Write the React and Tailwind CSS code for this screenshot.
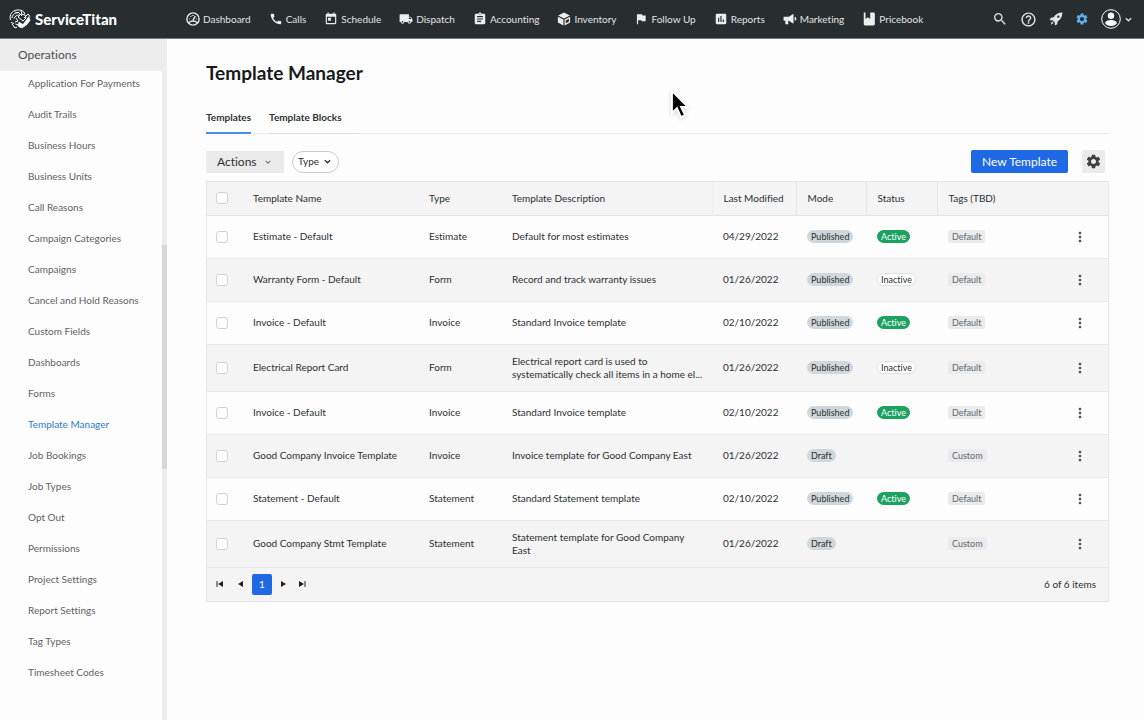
import {
  MdAssignment, MdCall, MdFlag, MdHelpOutline, MdInsertChart, MdLocalShipping,
  MdMoreVert, MdSearch, MdSettings, MdToday
} from 'react-icons/md';

const NAV = [
  { label: 'Dashboard',  icon: GaugeIcon },
  { label: 'Calls',      icon: MdCall },
  { label: 'Schedule',   icon: MdToday },
  { label: 'Dispatch',   icon: MdLocalShipping },
  { label: 'Accounting', icon: MdAssignment },
  { label: 'Inventory',  icon: BoxIcon },
  { label: 'Follow Up',  icon: MdFlag },
  { label: 'Reports',    icon: MdInsertChart },
  { label: 'Marketing',  icon: HornIcon },
  { label: 'Pricebook',  icon: BookIcon }
];

const SIDE = [
  'Application For Payments', 'Audit Trails', 'Business Hours', 'Business Units', 'Call Reasons',
  'Campaign Categories', 'Campaigns', 'Cancel and Hold Reasons', 'Custom Fields', 'Dashboards',
  'Forms', 'Template Manager', 'Job Bookings', 'Job Types', 'Opt Out', 'Permissions',
  'Project Settings', 'Report Settings', 'Tag Types', 'Timesheet Codes'
];

const ROWS = [
  { name: 'Estimate - Default',            type: 'Estimate',  desc: 'Default for most estimates',             date: '04/29/2022', mode: 'Published', status: 'Active',   tag: 'Default' },
  { name: 'Warranty Form - Default',       type: 'Form',      desc: 'Record and track warranty issues',       date: '01/26/2022', mode: 'Published', status: 'Inactive', tag: 'Default' },
  { name: 'Invoice - Default',             type: 'Invoice',   desc: 'Standard Invoice template',              date: '02/10/2022', mode: 'Published', status: 'Active',   tag: 'Default' },
  { name: 'Electrical Report Card',        type: 'Form',      desc: 'Electrical report card is used to\nsystematically check all items in a home el...', date: '01/26/2022', mode: 'Published', status: 'Inactive', tag: 'Default', tall: true },
  { name: 'Invoice - Default',             type: 'Invoice',   desc: 'Standard Invoice template',              date: '02/10/2022', mode: 'Published', status: 'Active',   tag: 'Default' },
  { name: 'Good Company Invoice Template', type: 'Invoice',   desc: 'Invoice template for Good Company East', date: '01/26/2022', mode: 'Draft',     status: null,       tag: 'Custom' },
  { name: 'Statement - Default',           type: 'Statement', desc: 'Standard Statement template',            date: '02/10/2022', mode: 'Published', status: 'Active',   tag: 'Default' },
  { name: 'Good Company Stmt Template',    type: 'Statement', desc: 'Statement template for Good Company\nEast', date: '01/26/2022', mode: 'Draft',  status: null,       tag: 'Custom', tall: true }
];

export default function App() {
  return (
    <div className="flex h-screen flex-col overflow-hidden bg-[#fdfdfd] font-['Lato',sans-serif] text-[10px] text-[#2b3033] [font-variant-ligatures:none]">
      <TopBar />
      <div className="flex min-h-0 flex-1">
        <Sidebar />
        <main className="min-w-0 flex-1 pt-[22px] pr-[35px] pl-[39px]">
          <h1 className="text-[19px] leading-6 font-bold text-[#17191b]">Template Manager</h1>
          <Tabs />
          <Toolbar />
          <TemplateTable />
        </main>
      </div>
      <Cursor />
    </div>
  );
}

/* ─── Layout ─── */

function TopBar() {
  return (
    <header className="flex h-[39px] shrink-0 items-center border-b border-[#777b7e] bg-[#282d30] text-[#e2e4e5]">
      <div className="flex w-[180px] items-center gap-1 pl-[9px]">
        <LogoMark />
        <span className="text-[15px] font-black text-white">ServiceTitan</span>
      </div>
      <nav className="flex flex-1 items-center gap-[18px] pl-[6px]">
        {NAV.map(n => (
          <a key={n.label} href="#" className="flex items-center gap-[3px] whitespace-nowrap">
            <n.icon className="size-[14px] text-[#eceded]" />
            {n.label}
          </a>
        ))}
      </nav>
      <div className="flex items-center gap-3 pr-3">
        <button aria-label="Search"><MdSearch className="size-4" /></button>
        <button aria-label="Help"><MdHelpOutline className="size-[17px]" /></button>
        <button aria-label="What's new"><RocketIcon className="size-[14px]" /></button>
        <button aria-label="Settings"><MdSettings className="size-[14px] text-[#5db0ef]" /></button>
        <button aria-label="Account" className="flex items-center gap-1">
          <AvatarIcon />
          <Chevron className="size-[7px]" />
        </button>
      </div>
    </header>
  );
}

function Sidebar() {
  return (
    <aside className="flex w-[167px] shrink-0 flex-col">
      <h2 className="bg-[#ededed] pl-[18px] text-[12px] leading-8 text-[#4b4f52]">Operations</h2>
      <div className="flex min-h-0 flex-1">
        <ul className="-mt-[3px] flex-1">
          {SIDE.map(s => (
            <li key={s} className="h-[31px] pl-7 leading-[31px] whitespace-nowrap">
              <a href="#" className={s === 'Template Manager' ? 'text-[#2f7bc9]' : 'text-[#606366]'}>{s}</a>
            </li>
          ))}
        </ul>
        <div className="w-[5px] bg-[#ececec] pt-[174px]">
          <div className="h-[224px] bg-[#d6d6d6]" />
        </div>
      </div>
    </aside>
  );
}

function Tabs() {
  return (
    <div className="mt-6 flex gap-[18px] border-b border-[#e9eaea] font-bold text-[#2f3437]">
      <button className="-mb-px border-b-2 border-[#4a90e2] pb-[7px] leading-4">Templates</button>
      <button className="-mb-px border-b border-[#dcdddd] pr-[17px] pb-2 leading-4">Template Blocks</button>
    </div>
  );
}

function Toolbar() {
  return (
    <div className="mt-4 flex items-center">
      <button className="flex h-[22px] w-[78px] items-center justify-between bg-[#ebebeb] pr-[13px] pl-[11px] text-[12px]">
        Actions <Chevron className="size-[6px] text-[#75797b]" />
      </button>
      <button className="ml-2 flex h-[22px] w-[47px] items-center justify-between rounded-full border border-[#c9cccd] bg-white pr-[7px] pl-[5px]">
        Type <Chevron className="size-[7px]" />
      </button>
      <button className="ml-auto h-[23px] w-[97px] rounded-xs bg-[#1f69e5] text-[12px] text-white">New Template</button>
      <button aria-label="Table settings" className="mr-1 ml-[14px] flex size-[23px] items-center justify-center rounded-xs bg-[#ebebeb]">
        <MdSettings className="size-[17px] text-[#3c4144]" />
      </button>
    </div>
  );
}

/* ─── Table ─── */

function TemplateTable() {
  return (
    <div className="mt-2 border border-[#e4e5e5] bg-[#f4f4f4]">
      <table className="w-full table-fixed text-left">
        <colgroup>
          <col className="w-[46px]" />
          <col className="w-[176px]" />
          <col className="w-[83px]" />
          <col className="w-[200px]" />
          <col className="w-[84px]" />
          <col className="w-[70px]" />
          <col className="w-[71px]" />
          <col />
          <col className="w-[56px]" />
        </colgroup>
        <thead>
          <tr className="h-[33px] border-b border-[#e4e5e5] [&>th]:font-normal">
            <th className="pl-[9px]"><Check label="Select all" /></th>
            <th>Template Name</th>
            <th>Type</th>
            <th>Template Description</th>
            <th className="border-l border-[#eeeeee] pl-[11px]">Last Modified</th>
            <th className="border-l border-[#e4e5e5] pl-[11px]">Mode</th>
            <th className="border-l border-[#e4e5e5] pl-[11px]">Status</th>
            <th className="border-l border-[#e4e5e5] pl-[11px]">Tags (TBD)</th>
            <th />
          </tr>
        </thead>
        <tbody>
          {ROWS.map((r, i) => <Row key={i} row={r} />)}
        </tbody>
      </table>
      <Pager />
    </div>
  );
}

function Row({ row }) {
  return (
    <tr className={`border-b border-[#e9e9e9] odd:bg-[#fdfdfd] ${row.tall ? 'h-[47px]' : 'h-[43px]'}`}>
      <td className="pl-[9px]"><Check label={`Select ${row.name}`} /></td>
      <td className="whitespace-nowrap">{row.name}</td>
      <td>{row.type}</td>
      <td className="leading-[13px] whitespace-pre-line">{row.desc}</td>
      <td className="pl-[11px]">{row.date}</td>
      <td className="pl-[11px]">
        <span className="block w-fit rounded-full bg-[#d0d7db] px-1 text-[9px] leading-[13px]">{row.mode}</span>
      </td>
      <td className="pl-[11px]">{row.status && <Status status={row.status} />}</td>
      <td className="pl-[11px]">
        <span className="block w-fit rounded-xs bg-[#e9ebec] px-1 text-[9px] leading-[13px] text-[#63686b]">{row.tag}</span>
      </td>
      <td>
        <button aria-label={`More actions for ${row.name}`} className="ml-5 block">
          <MdMoreVert className="size-4 text-[#4b4f52]" />
        </button>
      </td>
    </tr>
  );
}

function Status({ status }) {
  const look = status === 'Active'
    ? 'border-[#1ba160] bg-[#1ba160] text-white'
    : 'border-[#dfe1e2] bg-white';
  return <span className={`block w-fit rounded-full border px-[3px] text-[9px] leading-[11px] ${look}`}>{status}</span>;
}

function Check({ label }) {
  return (
    <input
      type="checkbox"
      aria-label={label}
      className="block size-3 appearance-none rounded-[3px] border border-[#cfd1d2] bg-white"
    />
  );
}

function Pager() {
  return (
    <div className="flex h-[33px] items-center pr-3 pl-[9px]">
      <button aria-label="First page"><PageArrow bar className="size-2" /></button>
      <button aria-label="Previous page" className="ml-3"><PageArrow className="size-2" /></button>
      <button className="mx-2 h-[21px] w-5 rounded-xs bg-[#1f69e5] text-white">1</button>
      <button aria-label="Next page"><PageArrow className="size-2 rotate-180" /></button>
      <button aria-label="Last page" className="ml-[10px]"><PageArrow bar className="size-2 rotate-180" /></button>
      <span className="ml-auto">6 of 6 items</span>
    </div>
  );
}

/* ─── Icons ─── */

function PageArrow({ bar, className }) {
  return (
    <svg viewBox="0 0 8 8" className={className} fill="#222">
      {bar && <rect x="0.5" y="1" width="1" height="6" />}
      <path d="M7 1v6L2 4z" />
    </svg>
  );
}

function Chevron({ className }) {
  return (
    <svg viewBox="0 0 8 8" className={className} fill="none" stroke="currentColor" strokeWidth="1.5">
      <path d="M1 2.5l3 3 3-3" />
    </svg>
  );
}

function LogoMark() {
  return (
    <svg viewBox="0 0 22 20" className="h-5 w-[22px]" fill="none" stroke="#fff" strokeWidth="1">
      <path d="M1.500 11C0 6 3 1.500 8 1c4-.5 7 1 8 4M3 9c0-3 3-5.500 6-5.500M5 9.500C6 7 8 6 10.500 6M2 13.500l3 1M3 15l3 4 2-1M7 9l2 3-3 1M9 3l4 4M6 2.500l2 2M12 2l1 3" />
      <path d="M9 8l3-3 4 1 1 3-3 3zM6.500 15l3 1 2 3" />
      <path d="M10 13l4 2.500 6-8 1 4-3 4-5 3.500-4-2z" fill="#fff" strokeWidth=".6" />
      <path d="M15 9l4-4 2 2.500" />
    </svg>
  );
}

function GaugeIcon({ className }) {
  return (
    <svg viewBox="0 0 24 24" className={className} fill="none" stroke="currentColor" strokeWidth="2.4">
      <circle cx="12" cy="12" r="10.5" />
      <path d="M5 18c4-3 10-3 14 0M12 14l4-7M6 12h1M12 5v2M18 12h-1M8 7l1 1" />
    </svg>
  );
}

function BoxIcon({ className }) {
  return (
    <svg viewBox="0 0 24 24" className={className} fill="currentColor">
      <path d="M12 1l10 5-10 5L2 6zM1.500 8.200L11 13v10L1.500 18z" />
      <path fillRule="evenodd" d="M22.500 8.200V18L13 23V13zM20.300 11.700L15 14.400v5l5.300-2.800z" />
    </svg>
  );
}

function HornIcon({ className }) {
  return (
    <svg viewBox="0 0 24 24" className={className} fill="currentColor">
      <path d="M1 8h9l8-5v17l-8-5H9v6H4v-6H1zM20 8c4 1 4 6 0 7z" />
    </svg>
  );
}

function BookIcon({ className }) {
  return (
    <svg viewBox="0 0 24 24" className={className} fill="currentColor">
      <path d="M3 1h3v11l4-3 4 3V1h6q2 0 2 2v18q0 2-2 2H5q-2 0-2-2z" />
    </svg>
  );
}

function RocketIcon({ className }) {
  return (
    <svg viewBox="0 0 24 24" className={className} fill="currentColor">
      <path fillRule="evenodd" d="M23 1C16 1 11 4 8 9L3 10l-2 4 5 0 4 4v5l4-2 1-5c5-3 8-8 8-15zM16 6a2 2 0 110 4 2 2 0 010-4z" />
      <path d="M5 16l3 3-5 3z" />
    </svg>
  );
}

function AvatarIcon() {
  return (
    <svg viewBox="0 0 20 20" className="size-5">
      <circle cx="10" cy="10" r="9.3" fill="none" stroke="#fff" strokeWidth="1" />
      <circle cx="10" cy="6.8" r="3.2" fill="#fff" />
      <path d="M4 14c1-4 11-4 12 0-2 4-10 4-12 0z" fill="#fff" />
    </svg>
  );
}

function Cursor() {
  return (
    <svg viewBox="0 0 18 29" className="pointer-events-none absolute top-[90px] left-[671px] h-[29px] w-[18px] drop-shadow-sm">
      <path d="M1 1v22l5-5 4 9 4-2-4-8h7z" fill="#000" stroke="#fff" strokeWidth="1.8" />
    </svg>
  );
}
